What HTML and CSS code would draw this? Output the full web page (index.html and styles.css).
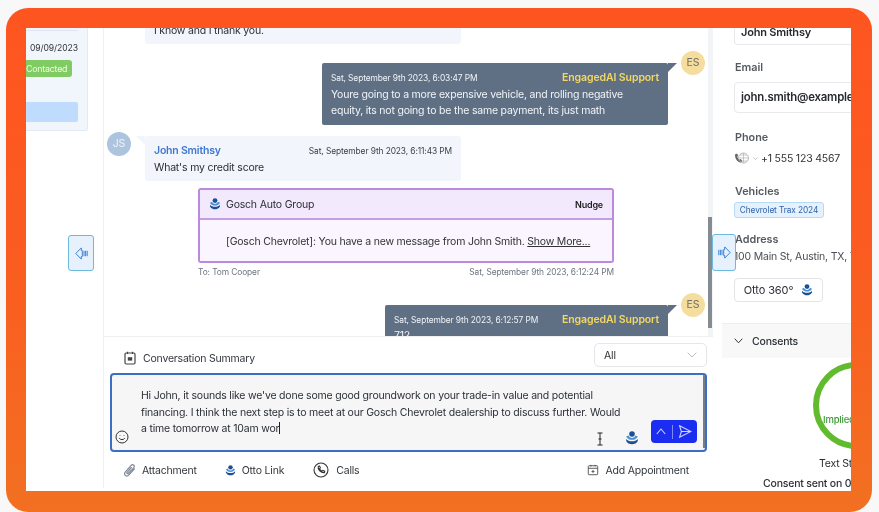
FILE: index.html
```html
<!DOCTYPE html>
<html lang="en">
<head>
<meta charset="utf-8">
<title>Conversation</title>
<link rel="stylesheet" href="styles.css">
</head>
<body>
<svg class="defs" width="0" height="0" aria-hidden="true">
  <symbol id="stack" viewBox="0 0 14 14">
    <circle cx="7" cy="3" r="2.800" fill="#1c4f96"/>
    <path d="M1.200 5.400 3.500 4.500c.6 1.600 1.900 2.500 3.500 2.500s2.900-.9 3.500-2.500l2.300.9C12 7.400 9.700 8.800 7 8.800S2 7.400 1.200 5.400z" fill="#4a8fd2"/>
    <path d="M1.200 7.900C2.400 9.500 4.500 10.300 7 10.300s4.600-.8 5.800-2.400v2C11.600 12 9.500 13.200 7 13.200s-4.600-1.200-5.800-3.300z" fill="#1c4f96"/>
  </symbol>
</svg>
<main class="frame">
  <div class="app">
    <aside class="left">
      <div class="lead-card">
        <div class="lead-rule"></div>
        <div class="lead-date">09/09/2023</div>
        <div class="lead-badge">Contacted</div>
        <div class="lead-bar"></div>
      </div>
    </aside>

    <section class="center">
      <div class="chat">
        <div class="thread">
          <div class="row">
            <div class="avatar-gap"></div>
            <div class="bubble in first"><p>I know and I thank you.</p></div>
          </div>
          <div class="row out r-out1">
            <div class="bubble agent a1">
              <div class="meta"><span class="time">Sat, September 9th 2023, 6:03:47 PM</span><span class="agent-name">EngagedAI Support</span></div>
              <p>Youre going to a more expensive vehicle, and rolling negative<br>equity, its not going to be the same payment, its just math</p>
            </div>
            <div class="avatar es">ES</div>
          </div>
          <div class="row r-in">
            <div class="avatar js">JS</div>
            <div class="bubble in john">
              <div class="meta"><span class="name">John Smithsy</span><span class="time">Sat, September 9th 2023, 6:11:43 PM</span></div>
              <p>What's my credit score</p>
            </div>
          </div>
          <div class="nudge">
            <div class="nudge-head">
              <span class="nudge-title"><svg class="ico12"><use href="#stack"/></svg>Gosch Auto Group</span>
              <b>Nudge</b>
            </div>
            <div class="nudge-body">[Gosch Chevrolet]: You have a new message from John Smith. <u>Show More...</u></div>
          </div>
          <div class="nudge-foot"><span>To: Tom Cooper</span><span>Sat, September 9th 2023, 6:12:24 PM</span></div>
          <div class="row out r-out2">
            <div class="bubble agent a2">
              <div class="meta"><span class="time">Sat, September 9th 2023, 6:12:57 PM</span><span class="agent-name">EngagedAI Support</span></div>
              <p>712</p>
            </div>
            <div class="avatar es">ES</div>
          </div>
        </div>
        <div class="scroll"><div class="thumb"></div></div>
      </div>

      <div class="composer">
        <div class="summary">
          <span class="tool t-summary">
            <svg class="ico14" viewBox="0 0 14 14" fill="none" stroke="#444" stroke-width="1.200"><rect x="2" y="2" width="10" height="11" rx="1.200"/><path d="M4.500 .8v2.200M9.500 .8v2.200"/><rect x="4.800" y="6.200" width="4.400" height="3.400" fill="#444" stroke="none"/></svg>
            Conversation Summary
          </span>
          <div class="select">All<svg width="10" height="6" viewBox="0 0 10 6" fill="none" stroke="#bbb" stroke-width="1"><path d="M.7.7 5 5l4.300-4.300"/></svg></div>
        </div>
        <div class="input">
          <div class="input-text">Hi John, it sounds like we've done some good groundwork on your trade-in value and potential financing. I think the next step is to meet at our Gosch Chevrolet dealership to discuss further. Would a time tomorrow at 10am wor<span class="caret"></span></div>
          <div class="input-bar">
            <svg class="smile" viewBox="0 0 14 14" fill="none" stroke="#333" stroke-width="1"><circle cx="7" cy="7" r="6"/><path d="M4.200 8.200c1.400 1.900 4.200 1.900 5.600 0"/><path d="M5 5.200v.6M9 5.200v.6"/></svg>
            <svg class="ibeam" viewBox="0 0 8 14" fill="none" stroke="#222" stroke-width="1"><path d="M1.500 1h5M1.500 13h5M4 1v12M2.500 7h3"/></svg>
            <svg class="ico14"><use href="#stack"/></svg>
            <div class="send">
              <svg width="10" height="7" viewBox="0 0 10 7" fill="none" stroke="#cfd6ff" stroke-width="1.100"><path d="M.8 6 5 1l4.200 5"/></svg>
              <i></i>
              <svg width="14" height="13" viewBox="0 0 14 13" fill="none" stroke="#cfd6ff" stroke-width="1.100"><path d="M1.600.8 13 6.500 1.600 12.200 3.400 6.500zM3.400 6.500H13"/></svg>
            </div>
          </div>
          <div class="input-scroll"></div>
        </div>
        <div class="actions">
          <span class="tool t-attach">
            <svg class="ico13" viewBox="0 0 14 14" fill="none" stroke="#7f8998" stroke-width="1.300"><path d="M12.600 5 6.400 11.800c-1.200 1.300-2.900 1.500-4 .5s-.9-2.700.2-3.900l6-6.700c.9-1 2.200-1.100 3-.4s.7 2-.1 2.900L5.900 10c-.5.500-1.100.6-1.500.2s-.3-1 .2-1.500l4.700-5.200"/></svg>
            Attachment
          </span>
          <span class="tool t-otto"><svg class="ico11"><use href="#stack"/></svg>Otto Link</span>
          <span class="tool t-calls">
            <svg class="ico16" viewBox="0 0 16 16" fill="none" stroke="#333" stroke-width="1.100"><circle cx="8" cy="8" r="7"/><path d="M5.300 4.200 6.600 4l.8 1.900-.9.8c.4 1.100 1.300 2.100 2.500 2.600l.8-.9 1.900.8-.2 1.400c-3.300.6-7.200-3.300-6.200-6.400z"/></svg>
            Calls
          </span>
          <span class="tool t-appt">
            <svg class="ico12" viewBox="0 0 14 14" fill="none" stroke="#555" stroke-width="1.100"><rect x="1.500" y="2" width="11" height="10.500" rx="1"/><path d="M1.500 5h11M4.500 1v2M9.500 1v2M7 7v3.500M5.300 8.700h3.400"/></svg>
            Add Appointment
          </span>
        </div>
      </div>
    </section>

    <aside class="right">
      <div class="field name-input">John Smithsy</div>
      <div class="label l-email">Email</div>
      <div class="field email-input">john.smith@example.com</div>
      <div class="label l-phone">Phone</div>
      <div class="phone">
        <svg width="16" height="13" viewBox="0 0 16 13" fill="none"><path d="M1 2.500 3 1.500l1.200 2.200-1 1c.4 1.300 1.200 2.300 2.400 3l1.200-.6 1.600 2-1.500 1.400C3.500 10.500.8 6.500 1 2.500z" fill="#666"/><circle cx="9.500" cy="6" r="5" stroke="#aaa" stroke-width=".8"/><path d="M4.500 6h10M9.500 1v10M6 3h7M6 9h7" stroke="#aaa" stroke-width=".6"/></svg>
        <svg class="phone-caret" width="5" height="3" viewBox="0 0 5 3" fill="none" stroke="#aaa" stroke-width=".7"><path d="m.5.500 2 2 2-2"/></svg>
        <span>+1 555 123 4567</span>
      </div>
      <div class="label l-veh">Vehicles</div>
      <div class="chip">Chevrolet Trax 2024</div>
      <div class="label l-addr">Address</div>
      <div class="addr">100 Main St, Austin, TX, 78701</div>
      <div class="otto">Otto 360°<svg class="ico12"><use href="#stack"/></svg></div>
      <div class="consents">
        <svg width="9" height="6" viewBox="0 0 9 6" fill="none" stroke="#333" stroke-width="1"><path d="M.7.7 4.500 4.800 8.300.7"/></svg>
        Consents
      </div>
      <div class="consent-body">
        <div class="ring"><span>Implied</span></div>
        <div class="status">Text Status</div>
        <div class="sent">Consent sent on 09/09/2023</div>
      </div>
    </aside>

    <div class="handle h-left">
      <svg width="13" height="13" viewBox="0 0 13 13" fill="none" stroke="#3b82d6" stroke-width="1"><path d="M.8 6.500 6.300.9v2.600h1v6h-1v2.600z"/><path d="M9 3.800v5.400M10.600 3.800v5.400M12.200 3.800v5.400"/></svg>
    </div>
    <div class="handle h-right">
      <svg width="13" height="13" viewBox="0 0 13 13" fill="none" stroke="#3b82d6" stroke-width="1"><path d="M12.200 6.500 6.700.9v2.600h-1v6h1v2.600z"/><path d="M4 3.800v5.400M2.400 3.800v5.400M.8 3.800v5.400"/></svg>
    </div>
  </div>
</main>
</body>
</html>
```

FILE: styles.css
```css
* { box-sizing: border-box; }
html, body { margin: 0; padding: 0; }
body {
  width: 879px;
  height: 512px;
  overflow: hidden;
  background: #f8f8f8;
  font-family: Inter, "Liberation Sans", sans-serif;
  letter-spacing: -.2px;
  color: #2b2f36;
}
p { margin: 0; }
.defs { position: absolute; }
.frame {
  margin: 8px 0 0 6px;
  width: 866px;
  height: 504px;
  padding: 20px 21px 21px 20px;
  border-radius: 22px;
  background: linear-gradient(180deg, #fe5520 0%, #fb5c20 50%, #f27022 100%);
}
.app {
  position: relative;
  display: flex;
  height: 463px;
  overflow: hidden;
  background: #fff;
  filter: blur(.3px);
}
.ico11 { width: 11px; height: 11px; flex: none; }
.ico12 { width: 12px; height: 12px; flex: none; }
.ico13 { width: 13px; height: 13px; flex: none; }
.ico14 { width: 14px; height: 14px; flex: none; }
.ico16 { width: 16px; height: 16px; flex: none; }

/* left column */
.left {
  flex: none;
  width: 78px;
  height: 460px;
  border-right: 1px solid #eef0f4;
}
.lead-card {
  width: 62px;
  height: 103px;
  padding-top: 2px;
  background: #f1f5fc;
  border-right: 1px solid #e4eaf3;
  border-bottom: 1px solid #e4eaf3;
  border-bottom-right-radius: 3px;
}
.lead-rule { width: 52px; height: 1px; background: #dfe5ee; }
.lead-date { margin: 10px 0 0 4px; font-size: 8.600px; letter-spacing: -.1px; line-height: 14px; white-space: nowrap; color: #333; }
.lead-badge {
  width: 46px;
  height: 17px;
  margin-top: 5px;
  background: #80cc63;
  border-radius: 0 3px 3px 0;
  color: #f2fbe9;
  font-size: 8.800px;
  line-height: 17px;
  text-align: right;
  padding-right: 6px;
  white-space: nowrap;
  overflow: hidden;
}
.lead-bar {
  width: 52px;
  height: 20px;
  margin-top: 25px;
  background: #bfdbfd;
  border-radius: 0 2px 2px 0;
}

/* centre column */
.center {
  flex: none;
  width: 609px;
  height: 463px;
  display: flex;
  flex-direction: column;
}
.chat {
  display: flex;
  height: 309px;
  flex: none;
  border-bottom: 1px solid #eef0f3;
  overflow: hidden;
}
.thread { flex: 1; min-width: 0; padding: 0 3px; }
.scroll { flex: none; width: 5px; background: #f3f4f5; }
.thumb { width: 4px; height: 111px; margin-top: 189px; background: #858b93; }
.row { display: flex; align-items: flex-start; }
.row.out { justify-content: flex-end; }
.avatar-gap { width: 38px; flex: none; }
.avatar {
  flex: none;
  width: 24px;
  height: 24px;
  border-radius: 50%;
  font-size: 10.500px;
  letter-spacing: 0;
  line-height: 24px;
  text-align: center;
}
.es { background: #f5de9d; color: #6f6f68; margin-left: 13px; margin-top: -12px; }
.js { background: #adc4de; color: #eef3f9; margin-right: 14px; margin-top: -4px; }
.bubble { position: relative; font-size: 10.500px; line-height: 16px; }
.bubble p { margin-top: 1px; }
.bubble.in { width: 316px; background: #f2f5fb; border-radius: 3px; padding: 7px 9px 6px; }
.bubble.first { margin-top: -20px; padding-top: 14px; height: 36px; }
.bubble.john { height: 45px; }
.bubble.john::before {
  content: "";
  position: absolute;
  left: -9px;
  top: 0;
  border-top: 9px solid #f2f5fb;
  border-left: 9px solid transparent;
}
.bubble.agent {
  background: #5f6f84;
  color: #f2f4f7;
  padding: 7px 9px;
  border-radius: 2px;
}
.bubble.agent::after {
  content: "";
  position: absolute;
  right: -9px;
  top: 0;
  border-top: 9px solid #5f6f84;
  border-right: 9px solid transparent;
}
.a1 { width: 346px; height: 62px; }
.a2 { width: 283px; height: 60px; }
.a2 p { margin-top: 0; }
.meta { display: flex; justify-content: space-between; align-items: center; height: 16px; }
.time { font-size: 8.400px; letter-spacing: -.1px; white-space: nowrap; }
.john .time { color: #3a3f47; }
.name { color: #3f78d0; font-weight: 600; font-size: 10.500px; }
.agent-name { color: #f1d865; font-weight: 600; font-size: 10.500px; letter-spacing: -.1px; white-space: nowrap; }
.r-out1 { margin-top: 19px; }
.r-in { margin-top: 11px; }
.nudge {
  width: 416px;
  height: 75px;
  margin: 7px 0 0 91px;
  border: 2px solid #b98ae0;
  border-radius: 3px;
  overflow: hidden;
  display: flex;
  flex-direction: column;
}
.nudge-head {
  flex: none;
  height: 30px;
  display: flex;
  align-items: center;
  justify-content: space-between;
  padding: 0 9px;
  background: #f3e9fc;
  border-bottom: 2px solid #c59de6;
  font-size: 10.500px;
}
.nudge-head b { font-size: 9px; font-weight: 600; color: #222; }
.nudge-title { display: flex; align-items: center; gap: 5px; }
.nudge-body {
  flex: 1;
  background: #faf5ff;
  padding: 14px 0 0 26px;
  font-size: 10.500px;
  line-height: 16px;
  color: #333;
  white-space: nowrap;
}
.nudge-foot {
  width: 416px;
  margin: 3px 0 0 91px;
  display: flex;
  justify-content: space-between;
  font-size: 8.400px;
  letter-spacing: -.1px;
  line-height: 12px;
  color: #6d7480;
}
.r-out2 { margin-top: 27px; }

/* composer */
.composer { flex: 1; padding: 6px 6px 0 6px; }
.summary { display: flex; align-items: center; justify-content: space-between; height: 24px; padding-left: 13px; }
.tool { display: flex; align-items: center; gap: 7px; font-size: 10.500px; color: #33373d; white-space: nowrap; }
.t-summary { gap: 6px; margin-top: 6px; }
.select {
  width: 113px;
  height: 24px;
  border: 1px solid #e4e6ea;
  border-radius: 5px;
  display: flex;
  align-items: center;
  justify-content: space-between;
  padding: 0 9px;
  font-size: 10.500px;
  color: #333;
}
.input {
  position: relative;
  display: flex;
  flex-direction: column;
  width: 597px;
  height: 79px;
  margin-top: 6px;
  padding: 13px 0 0 29px;
  background: #f6f6f7;
  border: 2px solid #3b6fc4;
  border-radius: 4px;
}
.input-text { width: 487px; font-size: 10.500px; line-height: 16.500px; color: #2b2f36; }
.caret { display: inline-block; width: 1px; height: 12px; background: #222; vertical-align: -2px; }
.input-bar { position: absolute; left: 0; right: 0; bottom: 0; height: 32px; }
.smile { position: absolute; left: 3px; bottom: 6px; width: 14px; height: 14px; }
.ibeam { position: absolute; left: 484px; bottom: 4px; width: 8px; height: 14px; }
.input-bar .ico14 { position: absolute; left: 513px; bottom: 5px; }
.send {
  position: absolute;
  left: 539px;
  bottom: 7px;
  width: 46px;
  height: 23px;
  background: #1a2df0;
  border-radius: 4px;
  display: flex;
  align-items: center;
  justify-content: space-between;
  padding: 0 5px;
}
.send i { width: 1px; height: 14px; background: #7d8cf5; }
.input-scroll { position: absolute; right: 0; top: 0; bottom: 2px; width: 2px; background: #777d86; }
.actions { position: relative; display: flex; align-items: center; height: 26px; margin-top: 5px; padding-left: 13px; }
.t-attach { gap: 6px; }
.t-otto { margin-left: 28px; gap: 6px; }
.t-calls { margin-left: 29px; gap: 7px; }
.t-appt { margin-left: auto; margin-right: 18px; gap: 6px; }

/* right column */
.right {
  flex: none;
  width: 129px;
  margin-left: 9px;
  height: 463px;
  overflow: hidden;
  font-size: 10.500px;
  white-space: nowrap;
}
.field {
  width: 140px;
  margin-left: 12px;
  border: 1px solid #e8e9ec;
  border-radius: 4px;
  font-weight: 600;
  color: #26292e;
  padding-left: 6px;
}
.name-input { height: 30px; margin-top: -13px; padding-top: 3px; font-size: 11px; line-height: 28px; border-top: 0; }
.email-input { height: 31px; line-height: 29px; margin-top: 7px; font-size: 11.400px; }
.label { margin-left: 13px; font-size: 10.800px; letter-spacing: 0; line-height: 14px; font-weight: 600; color: #555a61; }
.l-email { margin-top: 16px; }
.l-phone { margin-top: 18px; }
.l-veh { margin-top: 20px; }
.l-addr { margin-top: 15px; }
.phone { display: flex; align-items: center; height: 14px; margin: 6px 0 0 12px; color: #2f3237; }
.phone-caret { margin: 0 3px; }
.chip {
  width: 90px;
  height: 16px;
  margin: 3px 0 0 12px;
  background: #e5f1fd;
  border: 1px solid #b7d9f3;
  border-radius: 3px;
  color: #2f62ad;
  font-size: 8.300px;
  letter-spacing: -.1px;
  line-height: 14px;
  text-align: center;
}
.addr { margin: 2px 0 0 12px; line-height: 15px; color: #4a4e55; }
.otto {
  display: flex;
  align-items: center;
  justify-content: center;
  gap: 8px;
  width: 89px;
  height: 24px;
  margin: 14px 0 0 12px;
  border: 1px solid #e2e4e8;
  border-radius: 4px;
  font-size: 11px;
  letter-spacing: -.1px;
  color: #2b2f36;
}
.consents {
  display: flex;
  align-items: center;
  gap: 9px;
  height: 35px;
  margin-top: 21px;
  padding-left: 12px;
  background: #f8f8f8;
  border-top: 1px solid #eeeeee;
  font-weight: 500;
}
.consent-body { position: relative; }
.ring {
  width: 87px;
  height: 87px;
  margin: 4px 0 0 91px;
  border: 6px solid #62bb2f;
  border-radius: 50%;
  padding: 46px 0 0 4px;
  font-size: 9.500px;
  line-height: 12px;
  color: #3f9a3a;
  font-weight: 500;
}
.status { margin: 8px 0 0 97px; line-height: 14px; color: #2b2f36; }
.sent { margin: 6px 0 0 41px; line-height: 14px; color: #2b2f36; font-weight: 500; }

/* panel handles */
.handle {
  position: absolute;
  display: flex;
  align-items: center;
  justify-content: center;
  background: #e6f1fd;
  border: 1px solid #6cb9de;
  border-radius: 3px;
}
.h-left { left: 42px; top: 207px; width: 26px; height: 36px; }
.h-right { left: 686px; top: 206px; width: 24px; height: 37px; }
```
